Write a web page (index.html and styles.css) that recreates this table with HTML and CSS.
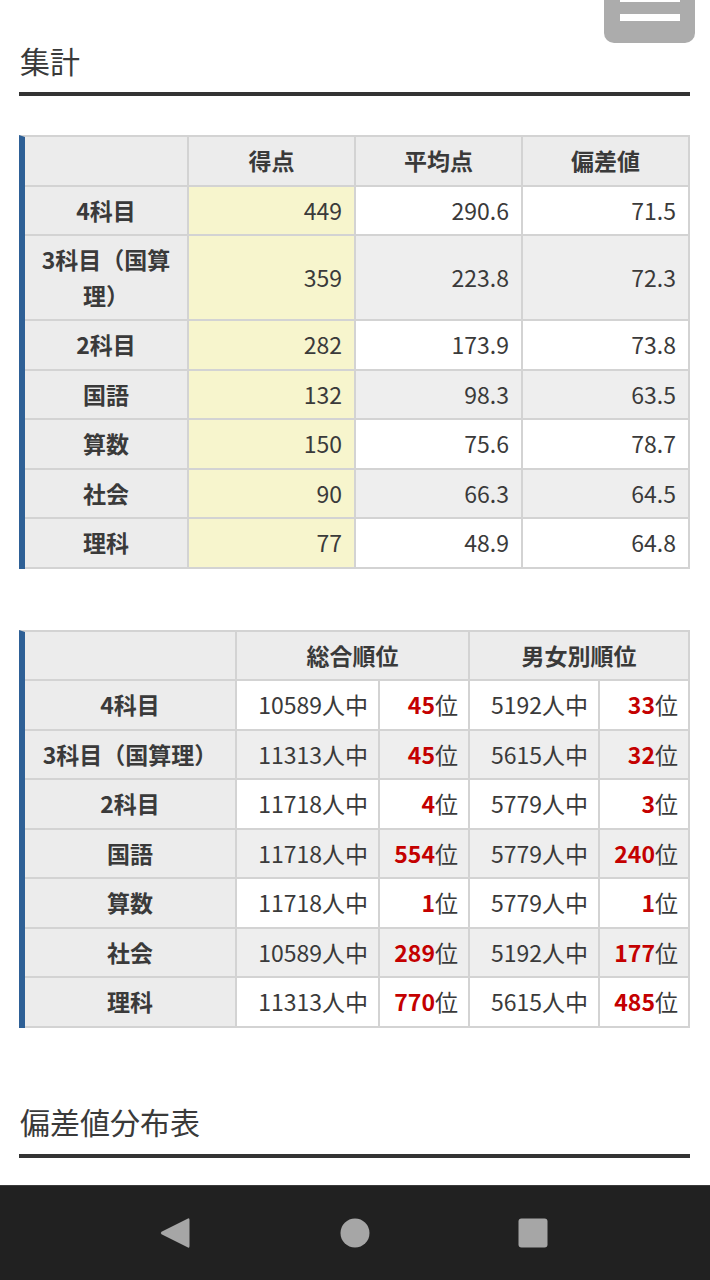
FILE: index.html
```html
<!DOCTYPE html>
<html lang="ja">
<head>
<meta charset="utf-8">
<title>集計</title>
<link rel="stylesheet" href="styles.css">
</head>
<body>
<div class="screen">
  <button class="menu-btn" aria-label="menu"><span class="bar bar-top"></span><span class="bar"></span></button>
  <main class="content">
    <h2 class="section-title first">集計</h2>
    <table class="data score">
      <colgroup><col class="c164"><col class="c167"><col class="c167"><col class="c167"></colgroup>
      <thead>
        <tr><th class="head"></th><th class="head">得点</th><th class="head">平均点</th><th class="head">偏差値</th></tr>
      </thead>
      <tbody>
        <tr class="odd"><th>4科目</th><td class="hl">449</td><td>290.6</td><td>71.5</td></tr>
        <tr class="even"><th>3科目（国算理）</th><td class="hl">359</td><td>223.8</td><td>72.3</td></tr>
        <tr class="odd"><th>2科目</th><td class="hl">282</td><td>173.9</td><td>73.8</td></tr>
        <tr class="even"><th>国語</th><td class="hl">132</td><td>98.3</td><td>63.5</td></tr>
        <tr class="odd"><th>算数</th><td class="hl">150</td><td>75.6</td><td>78.7</td></tr>
        <tr class="even"><th>社会</th><td class="hl">90</td><td>66.3</td><td>64.5</td></tr>
        <tr class="odd"><th>理科</th><td class="hl">77</td><td>48.9</td><td>64.8</td></tr>
      </tbody>
    </table>

    <table class="data rank">
      <colgroup><col class="c212"><col class="c143"><col class="c90"><col class="c130"><col class="c90"></colgroup>
      <thead>
        <tr><th class="head"></th><th class="head" colspan="2">総合順位</th><th class="head" colspan="2">男女別順位</th></tr>
      </thead>
      <tbody>
        <tr class="odd"><th>4科目</th><td>10589人中</td><td><b>45</b>位</td><td>5192人中</td><td><b>33</b>位</td></tr>
        <tr class="even"><th>3科目（国算理）</th><td>11313人中</td><td><b>45</b>位</td><td>5615人中</td><td><b>32</b>位</td></tr>
        <tr class="odd"><th>2科目</th><td>11718人中</td><td><b>4</b>位</td><td>5779人中</td><td><b>3</b>位</td></tr>
        <tr class="even"><th>国語</th><td>11718人中</td><td><b>554</b>位</td><td>5779人中</td><td><b>240</b>位</td></tr>
        <tr class="odd"><th>算数</th><td>11718人中</td><td><b>1</b>位</td><td>5779人中</td><td><b>1</b>位</td></tr>
        <tr class="even"><th>社会</th><td>10589人中</td><td><b>289</b>位</td><td>5192人中</td><td><b>177</b>位</td></tr>
        <tr class="odd"><th>理科</th><td>11313人中</td><td><b>770</b>位</td><td>5615人中</td><td><b>485</b>位</td></tr>
      </tbody>
    </table>

    <h2 class="section-title second">偏差値分布表</h2>
  </main>
  <nav class="navbar">
    <svg class="nav-icon" width="30" height="32" viewBox="0 0 30 32"><path d="M28 1.5 Q29.5 0.8 29.5 3 L29.5 29 Q29.5 31.2 28 30.5 L1.5 17.2 Q0 16 1.5 14.8 Z" fill="#a6a6a6"/></svg>
    <svg class="nav-icon" width="30" height="30" viewBox="0 0 30 30"><circle cx="15" cy="15" r="14.5" fill="#a6a6a6"/></svg>
    <svg class="nav-icon" width="30" height="30" viewBox="0 0 30 30"><rect x="0.5" y="0.5" width="29" height="29" rx="3" fill="#a6a6a6"/></svg>
  </nav>
</div>
</body>
</html>
```

FILE: styles.css
```css
* { box-sizing: border-box; }
html, body { margin: 0; padding: 0; background: #fff; }
body {
  font-family: "Noto Sans CJK JP", "Noto Sans", sans-serif;
  color: #3a3a3a;
}
.screen {
  position: relative;
  width: 710px;
  height: 1280px;
  display: flex;
  flex-direction: column;
  overflow: hidden;
}
.content {
  flex: 1;
  padding: 0 20px 0 19px;
}
.section-title {
  margin: 0;
  font-size: 30px;
  font-weight: 400;
  line-height: 40px;
  color: #3a3a3a;
  padding: 0 0 12px 1px;
  border-bottom: 4px solid #333;
}
.section-title.first { margin-top: 40px; }
.section-title.second { margin-top: 73px; padding-bottom: 13px; }

.data {
  width: 671px;
  table-layout: fixed;
  border-collapse: separate;
  border-spacing: 0;
  border-top: 2px solid #d3d3d3;
  border-left: 6px solid #2e6096;
  font-size: 23px;
}
.score { margin-top: 39px; }
.rank { margin-top: 61px; }
.c164 { width: 164px; }
.c167 { width: 167px; }
.c212 { width: 212px; }
.c143 { width: 143px; }
.c90 { width: 90px; }
.c130 { width: 130px; }

.data th, .data td {
  padding: 6px 10px;
  line-height: 35.5px;
  border-right: 2px solid #d3d3d3;
  border-bottom: 2px solid #d3d3d3;
  vertical-align: middle;
}
.data th {
  background: #ececec;
  font-weight: 700;
  text-align: center;
  color: #3a3a3a;
}
.data td {
  text-align: right;
  font-weight: 400;
}
.score td { padding-right: 12px; }
.data th.head { background: #ececec; }
.odd td { background: #fff; }
.even td { background: #eeeeee; }
.data td.hl { background: #f7f5cd; }
.rank td b { color: #c40000; font-weight: 700; }

.menu-btn {
  position: absolute;
  top: 0;
  right: 15px;
  width: 91px;
  height: 43px;
  padding: 0;
  border: 0;
  border-radius: 0 0 10px 10px;
  background: #acacac;
  display: flex;
  flex-direction: column;
  align-items: center;
  gap: 12px;
}
.menu-btn .bar {
  display: block;
  width: 60px;
  height: 7px;
  background: #fff;
}
.menu-btn .bar-top { height: 2px; }

.navbar {
  height: 95px;
  background: #212121;
  border-top: 1px solid #3a3a3a;
  display: flex;
  align-items: center;
  padding: 0 0 0 160px;
  gap: 0;
}
.nav-icon { display: block; }
.nav-icon:nth-child(1) { margin-right: 150px; }
.nav-icon:nth-child(2) { margin-right: 148px; }
```
